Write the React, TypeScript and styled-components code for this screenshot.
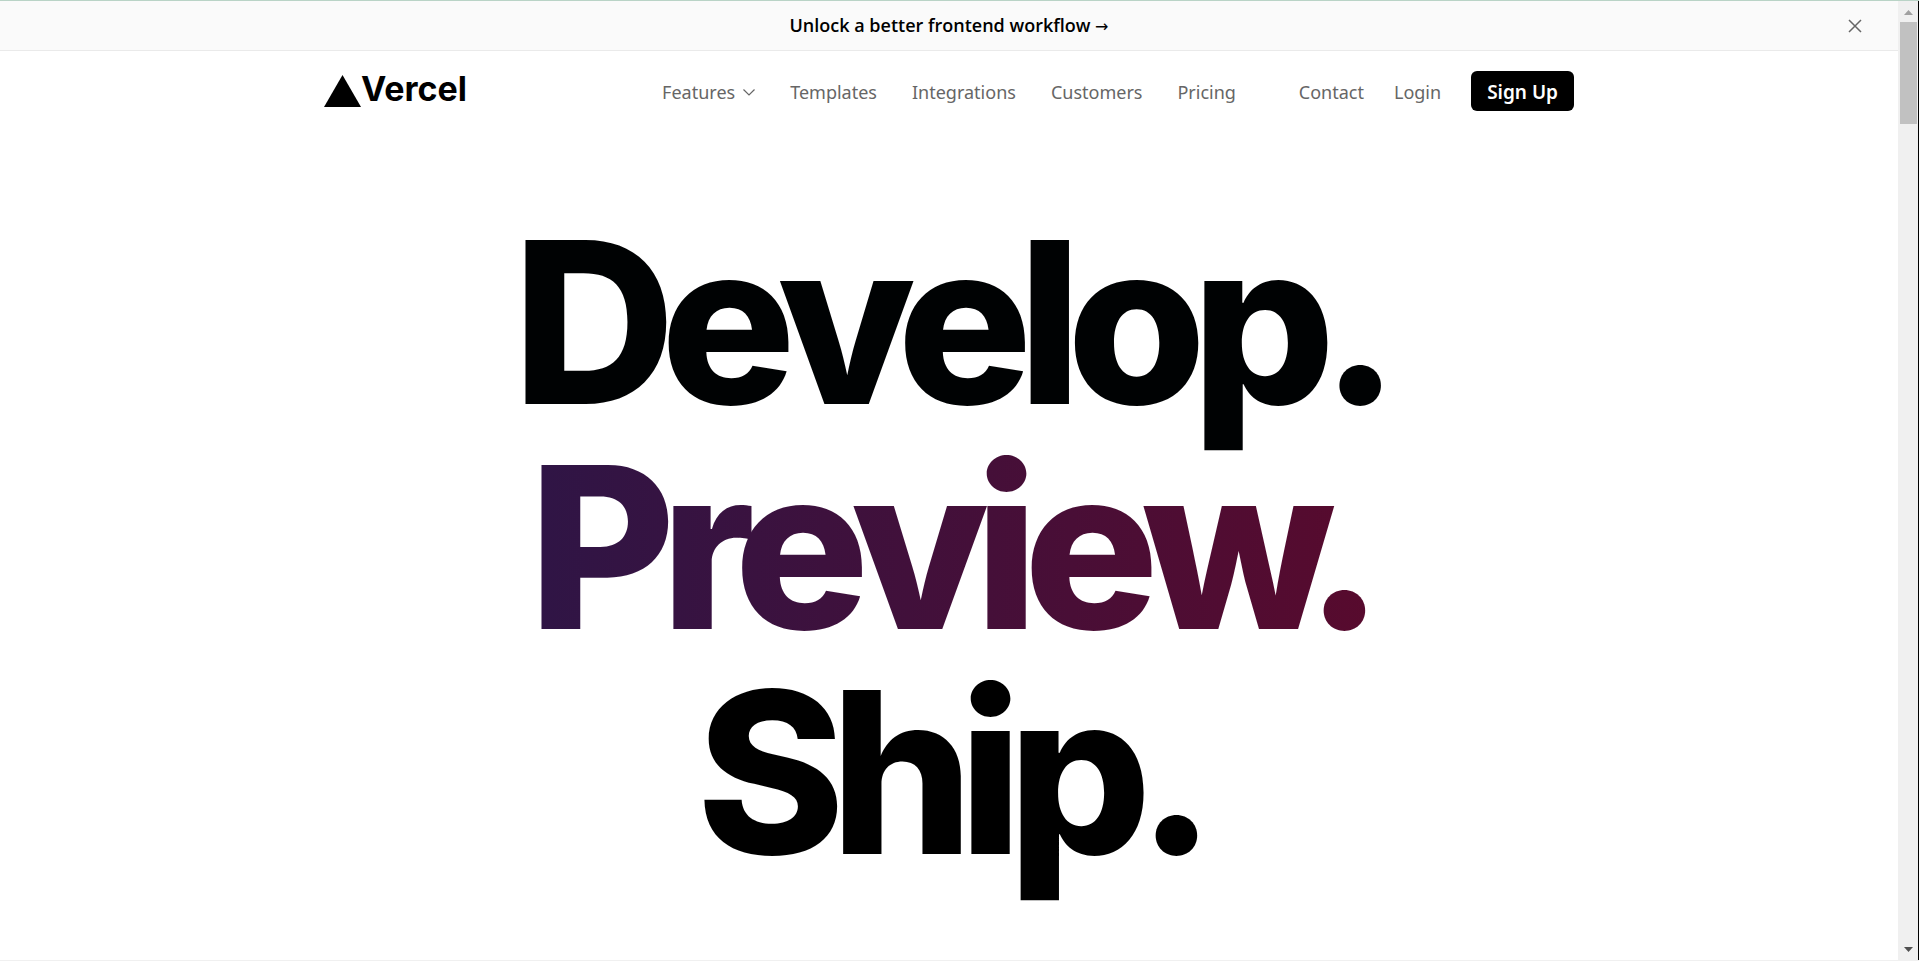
import React from "react";
import styled, { createGlobalStyle } from "styled-components";

const GlobalStyle = createGlobalStyle`
  * { box-sizing: border-box; }
  body {
    margin: 0;
    background: #fff;
    color: #000;
    font-family: "Noto Sans", "Open Sans", sans-serif;
  }
`;

const Shell = styled.div`
  display: flex;
  min-height: 100vh;
  border-top: 1px solid #b9d3c6;
  border-bottom: 1px solid #f0f0f0;
`;

const Page = styled.div`
  flex: 1;
  min-width: 0;
`;

const Banner = styled.aside`
  display: grid;
  grid-template-columns: 1fr auto 1fr;
  align-items: center;
  height: 50px;
  padding: 0 33px;
  background: #fafafa;
  border-bottom: 1px solid #eaeaea;
`;

const BannerLink = styled.a`
  grid-column: 2;
  color: #000;
  font-family: "Open Sans", "Noto Sans", sans-serif;
  font-size: 18px;
  font-weight: 600;
  line-height: 24px;
  text-decoration: none;
`;

const Arrow = styled.span`
  font-family: "DejaVu Sans", sans-serif;
  font-size: 16px;
  font-weight: 400;
`;

const CloseButton = styled.button`
  justify-self: end;
  display: flex;
  padding: 0;
  border: 0;
  background: none;
  color: #666;
  cursor: pointer;
`;

const Header = styled.header`
  display: grid;
  grid-template-columns: 1fr auto 1fr;
  align-items: center;
  max-width: 1250px;
  height: 80px;
  margin: 0 auto;
`;

const Logo = styled.a`
  display: flex;
  align-items: flex-start;
  color: #000;
  font-family: Inter, sans-serif;
  font-size: 34px;
  font-weight: 700;
  line-height: 28px;
  text-decoration: none;
`;

const Nav = styled.nav`
  display: flex;
  align-items: center;
  gap: 35px;
`;

const Actions = styled.div`
  display: flex;
  align-items: center;
  justify-content: flex-end;
  gap: 30px;
`;

const NavLink = styled.a`
  padding-top: 2px;
  color: #666;
  font-size: 18px;
  line-height: 24px;
  text-decoration: none;
`;

const MenuButton = styled.button`
  display: flex;
  align-items: center;
  gap: 8px;
  padding: 2px 0 0;
  border: 0;
  background: none;
  color: #666;
  font: inherit;
  font-size: 18px;
  line-height: 24px;
  cursor: pointer;
`;

const SignUp = styled.button`
  height: 40px;
  padding: 2px 16px 0;
  border: 0;
  border-radius: 6px;
  background: #000;
  color: #fff;
  font: inherit;
  font-size: 19px;
  font-weight: 600;
  line-height: 24px;
  cursor: pointer;
`;

const Hero = styled.h1`
  margin: 0;
  padding: 79px 0 73px;
  font-family: Inter, sans-serif;
  font-size: clamp(64px, 12vw, 225px);
  font-weight: 800;
  font-variation-settings: "opsz" 14;
  line-height: 1;
  letter-spacing: -0.065em;
  text-align: center;
`;

const GradientWord = styled.span<{ $from: string; $to: string }>`
  display: block;
  width: fit-content;
  margin: 0 auto;
  padding: 0 16px;
  color: transparent;
  background: linear-gradient(90deg, ${(p) => p.$from}, ${(p) => p.$to});
  background-clip: text;
  -webkit-background-clip: text;
`;

const PlainWord = styled.span<{ $color: string }>`
  display: block;
  color: ${(p) => p.$color};
`;

const ScrollTrack = styled.div`
  display: flex;
  flex-direction: column;
  align-items: center;
  width: 21px;
  padding-left: 1px;
  background: #f0f0f0;
  border-right: 1px solid #000;
`;

const ScrollThumb = styled.div`
  width: 17px;
  height: 102px;
  background: #c1c1c1;
`;

const ScrollArrow = styled.svg`
  display: block;
  width: 17px;
  height: 21px;

  &:last-child {
    margin-top: auto;
  }
`;

export default function App() {
  return (
    <>
      <GlobalStyle />
      <Shell>
        <Page>
          <Banner>
            <BannerLink href="#workflow">
              Unlock a better frontend workflow <Arrow>→</Arrow>
            </BannerLink>
            <CloseButton aria-label="Close">
              <svg width="20" height="20" viewBox="0 0 20 20" fill="none" stroke="currentColor" strokeWidth="1.5">
                <path d="M4 4l12 12M16 4L4 16" />
              </svg>
            </CloseButton>
          </Banner>
          <Header>
            <Logo href="#home">
              <svg width="37" height="32" viewBox="0 0 37 32" aria-hidden="true">
                <path d="M18.5 0L37 32H0z" />
              </svg>
              Vercel
            </Logo>
            <Nav>
              <MenuButton>
                Features
                <svg width="12" height="8" viewBox="0 0 12 8" fill="none" stroke="currentColor" strokeWidth="1.2">
                  <path d="M0.500 1.500l5.500 5.500 5.500-5.500" />
                </svg>
              </MenuButton>
              <NavLink href="#templates">Templates</NavLink>
              <NavLink href="#integrations">Integrations</NavLink>
              <NavLink href="#customers">Customers</NavLink>
              <NavLink href="#pricing">Pricing</NavLink>
            </Nav>
            <Actions>
              <NavLink href="#contact">Contact</NavLink>
              <NavLink href="#login">Login</NavLink>
              <SignUp>Sign Up</SignUp>
            </Actions>
          </Header>
          <main>
            <Hero>
              <PlainWord $color="#000203">Develop.</PlainWord>
              <GradientWord $from="#2e1546" $to="#580a2d">Preview.</GradientWord>
              <PlainWord $color="#000">Ship.</PlainWord>
            </Hero>
          </main>
        </Page>
        <ScrollTrack aria-hidden="true">
          <ScrollArrow viewBox="0 0 17 21">
            <path d="M4 14l4.500-5 4.500 5z" fill="#a0a0a0" />
          </ScrollArrow>
          <ScrollThumb />
          <ScrollArrow viewBox="0 0 17 21">
            <path d="M4 8l4.500 5 4.500-5z" fill="#505050" />
          </ScrollArrow>
        </ScrollTrack>
      </Shell>
    </>
  );
}
